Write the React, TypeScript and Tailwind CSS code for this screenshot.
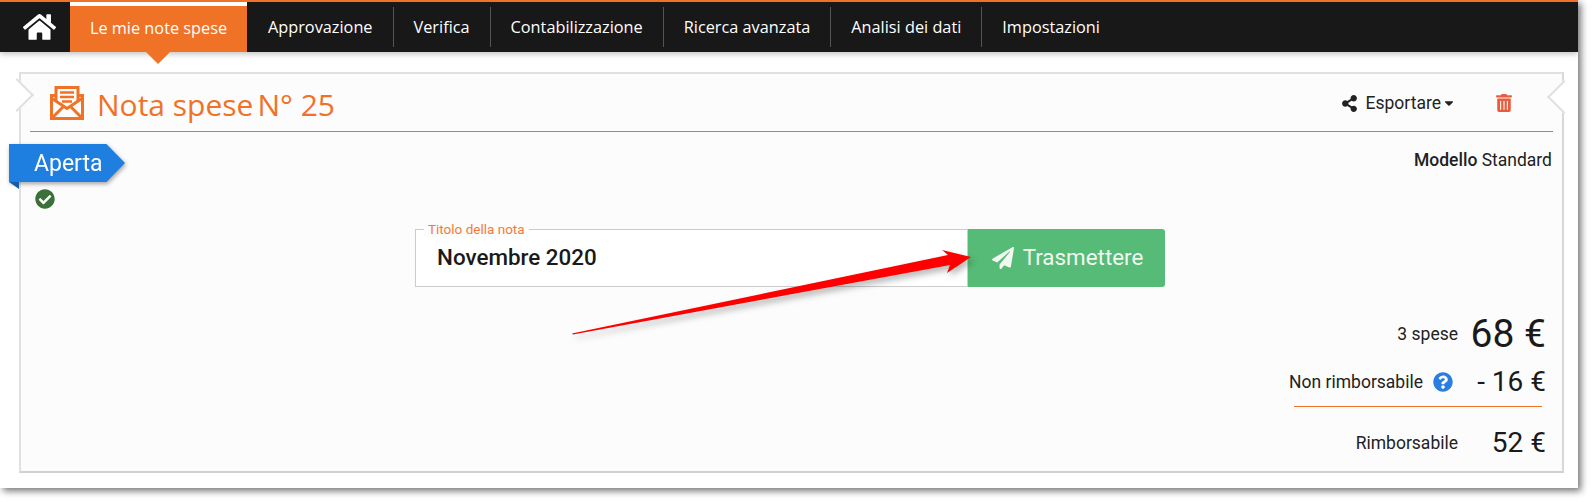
import { FaCaretDown, FaCheckCircle, FaHome, FaPaperPlane, FaQuestionCircle, FaShareAlt, FaTrashAlt } from 'react-icons/fa';

const tabs = ['Approvazione', 'Verifica', 'Contabilizzazione', 'Ricerca avanzata', 'Analisi dei dati', 'Impostazioni'];

function EnvelopeIcon() {
  return (
    <svg viewBox="0 0 34 34" className="h-[34px] w-[34px]" fill="none" stroke="#f07226" strokeWidth="3">
      <path d="M6 15 V1.5 H28 V15" />
      <path d="M1.5 9.5 H6 M28 9.5 H32.5" />
      <path d="M1.5 8 V32.5 H32.5 V8" />
      <path d="M2 12.5 L17 22.5 L32 12.5 M2 32 L13 21 M32 32 L21 21" />
      <path d="M10 6.5 H24 M10 11 H24 M12 15.5 H22" strokeWidth="2.4" />
    </svg>
  );
}

function Amount({ label, value, size, icon }: { label: string; value: string; size: string; icon?: boolean }) {
  return (
    <div className="flex items-center justify-end">
      <span className="text-[17.5px] text-[#222]">{label}</span>
      {icon && <FaQuestionCircle className="ml-[10px] mr-[5px] h-[20px] w-[20px] text-[#2a7de1]" />}
      <span className={`w-[88px] text-right text-[#1a1a1a] ${size}`}>{value}</span>
    </div>
  );
}

export default function App() {
  return (
    <div className="h-[503px] w-[1593px] overflow-hidden bg-white font-['Roboto',sans-serif]">
      <div className="h-[488px] w-[1578px] overflow-hidden bg-white shadow-[3px_3px_7px_rgba(0,0,0,0.55)]">
        <nav className="relative flex h-[52px] border-t-2 border-[#f07226] bg-[#181818] font-['Open_Sans',sans-serif] text-[16.3px] text-white shadow-[0_2px_6px_rgba(0,0,0,0.25)]">
          <div className="flex w-[70px] items-center justify-center pl-[8px]">
            <FaHome className="h-[30px] w-[33px]" />
          </div>
          <div className="relative mr-[1px] flex w-[177px] items-center justify-center border-t-4 border-white bg-[#f07226] pb-[2px]">
            Le mie note spese
            <span className="absolute -bottom-[12px] left-[76px] h-0 w-0 border-x-[12px] border-t-[12px] border-x-transparent border-t-[#f07226]" />
          </div>
          {tabs.map((tab, i) => (
            <div key={tab} className="flex items-center">
              {i > 0 && <span className="h-[40px] w-px bg-[#555]" />}
              <span className="px-[20px] pt-[1px]">{tab}</span>
            </div>
          ))}
        </nav>

        <main className="relative ml-[19px] mt-[20px] h-[401px] w-[1545px] border-2 border-[#e0e0e0] border-b-[#d0d0d0] border-r-[#d8d8d8] bg-[#fcfcfc] px-[9px]">
          <span className="absolute -left-[16px] top-[9px] h-[24px] w-[24px] rotate-45 border-r-2 border-t-2 border-[#e0e0e0] bg-white" />
          <span className="absolute -right-[14px] top-[11px] h-[24px] w-[24px] rotate-45 border-b-2 border-l-2 border-[#e0e0e0] bg-white" />

          <header className="relative flex h-[58px] items-center justify-between border-b border-[#e8703a] pl-[20px] pr-[41px]">
            <div className="flex items-center gap-[13px]">
              <EnvelopeIcon />
              <h1 className="flex gap-[4px] pt-[3px] font-['Open_Sans',sans-serif] text-[30px] text-[#f07226]">
                <span>Nota spese</span>
                <span>N° 25</span>
              </h1>
            </div>
            <div className="flex items-center pt-[1px] text-[17.5px] text-[#222]">
              <FaShareAlt className="mr-[8px] h-[17px] w-[17px]" />
              Esportare
              <FaCaretDown className="ml-[3px] h-[14px] w-[10px]" />
              <FaTrashAlt className="ml-[42px] h-[18px] w-[16px] text-[#ea5a3c]" />
            </div>
          </header>

          <div className="absolute -left-[12px] top-[70px]">
            <div className="drop-shadow-[1px_2px_2px_rgba(0,0,0,0.35)]">
              <div className="flex h-[38px] w-[116px] items-center bg-[#1f7fe0] pl-[25px] pt-[2px] text-[23px] text-white [clip-path:polygon(0_0,84%_0,100%_50%,84%_100%,0_100%)]">
                Aperta
              </div>
            </div>
            <span className="absolute left-0 top-[38px] h-0 w-0 border-l-[10px] border-t-[7px] border-l-transparent border-t-[#135ea8]" />
            <FaCheckCircle className="ml-[26px] mt-[7px] h-[20px] w-[20px] text-[#3b7038]" />
          </div>

          <p className="mr-[1px] mt-[18px] text-right text-[17.5px] leading-[20px] text-[#222]">
            <b className="font-medium">Modello</b> Standard
          </p>

          <div className="ml-[385px] mt-[59px] flex">
            <div className="relative flex h-[58px] w-[553px] items-center border border-[#ccc] bg-white pl-[21px] text-[22.4px] font-medium text-[#1a1a1a]">
              <span className="absolute -top-[9px] left-[8px] bg-[#fcfcfc] px-[4px] text-[13.5px] font-normal leading-[16px] text-[#f5793b]">Titolo della nota</span>
              Novembre 2020
            </div>
            <button className="flex h-[58px] w-[197px] items-center justify-center gap-[9px] rounded-r-[3px] bg-[#55bb77] pl-[2px] text-[22.4px] text-[#f0f8f0]">
              <FaPaperPlane className="h-[22px] w-[22px]" />
              Trasmettere
            </button>
          </div>

          <svg className="absolute left-[541px] top-[170px] overflow-visible drop-shadow-[3px_4px_3px_rgba(0,0,0,0.28)]" width="420" height="100" viewBox="0 0 420 100">
            <path d="M10 89.5 L386 11 L380 6 L409 13 L385 29 L388 21 L11 90.5 Z" fill="#ff0000" />
          </svg>

          <section className="absolute bottom-[8px] right-[16px] w-[420px] text-[#1a1a1a]">
            <Amount label="3 spese" value="68 €" size="text-[39px] leading-[46px]" />
            <div className="mt-[5px]">
              <Amount label="Non rimborsabile" value="- 16 €" size="text-[28px] leading-[40px]" icon />
            </div>
            <div className="ml-auto mr-[4px] mt-[4px] h-px w-[248px] bg-[#f07226]" />
            <div className="mt-[16px]">
              <Amount label="Rimborsabile" value="52 €" size="text-[28px] leading-[40px]" />
            </div>
          </section>
        </main>
      </div>
    </div>
  );
}
